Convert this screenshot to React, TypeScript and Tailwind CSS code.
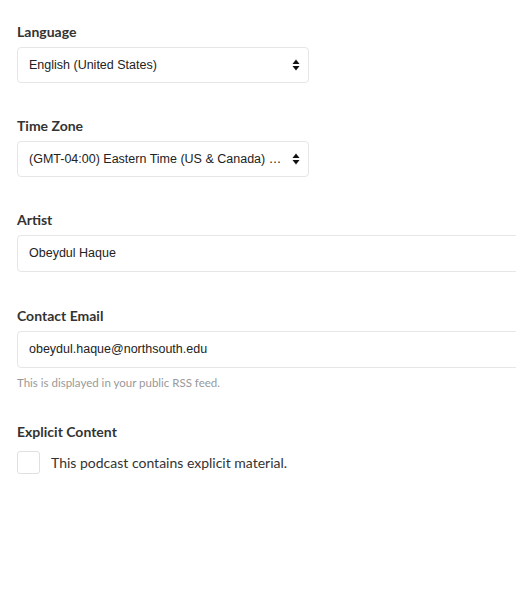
export default function App() {
  const label = "block text-[14px] leading-[20px] font-bold text-[#333] mb-[5px] [font-family:Lato,sans-serif]"
  const box =
    "flex items-center h-[36px] rounded-[4px] border border-[#e6e6e6] bg-white pl-[11px] text-[12.5px] whitespace-nowrap text-[#222] [font-family:'Liberation_Sans',Arial,sans-serif]"

  return (
    <div className="min-h-screen w-full bg-white pl-[17px] pt-[22px] overflow-hidden">
      <div className="mb-[33px]">
        <label className={label}>Language</label>
        <div className={`${box} w-[292px] justify-between pr-[8px]`}>
          <span>English (United States)</span>
          <Arrows />
        </div>
      </div>

      <div className="mb-[33px]">
        <label className={label}>Time Zone</label>
        <div className={`${box} w-[292px] justify-between pr-[8px]`}>
          <span>(GMT-04:00) Eastern Time (US &amp; Canada) …</span>
          <Arrows />
        </div>
      </div>

      <div className="mb-[34px]">
        <label className={`${label} mb-[4px]`}>Artist</label>
        <div className={`${box} h-[37px] w-[540px]`}>Obeydul Haque</div>
      </div>

      <div className="mb-[31px]">
        <label className={`${label} mb-[4px]`}>Contact Email</label>
        <div className={`${box} h-[37px] w-[540px]`}>obeydul.haque@northsouth.edu</div>
        <p className="mt-[7px] text-[11.5px] leading-[16px] text-[#999] [font-family:Lato,sans-serif]">
          This is displayed in your public RSS feed.
        </p>
      </div>

      <div>
        <label className={`${label} mb-[9px]`}>Explicit Content</label>
        <div className="flex items-center gap-[11px]">
          <span className="w-[23px] h-[23px] rounded-[3px] border border-[#e0e0e0] bg-white" />
          <span className="text-[14px] text-[#333] [font-family:Lato,sans-serif]">
            This podcast contains explicit material.
          </span>
        </div>
      </div>
    </div>
  )
}

function Arrows() {
  return (
    <svg width="8" height="12" viewBox="0 0 8 12" className="shrink-0">
      <path d="M4 0.5 L7.5 5 H0.5 Z" fill="#111" />
      <path d="M4 11.5 L7.5 7 H0.5 Z" fill="#111" />
    </svg>
  )
}
